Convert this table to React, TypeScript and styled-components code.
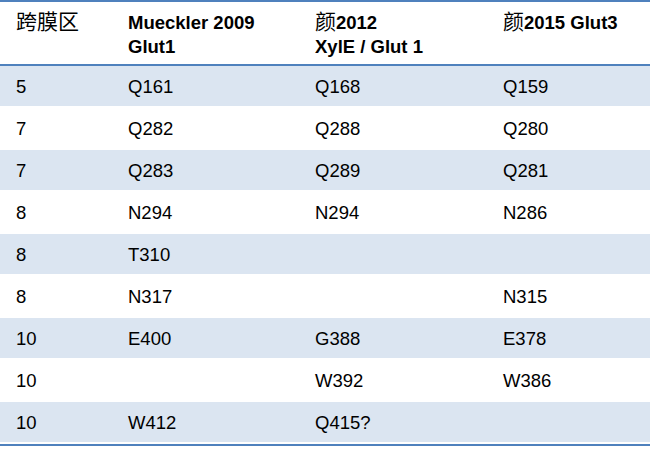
import React from 'react'
import styled, { createGlobalStyle } from 'styled-components'

const GlobalStyle = createGlobalStyle`
  body {
    margin: 0;
    background: #ffffff;
    font-family: 'Liberation Sans', 'Noto Sans CJK SC', sans-serif;
    color: #000000;
  }
`

const COLUMNS = '112px 187px 188px 163px'

const Table = styled.div`
  width: 650px;
  display: flex;
  flex-direction: column;
  border-top: 2px solid #4f81bd;
  border-bottom: 2px solid #4f81bd;
`

const HeaderRow = styled.div`
  display: grid;
  grid-template-columns: ${COLUMNS};
  height: 62px;
  box-sizing: content-box;
  border-bottom: 2px solid #4f81bd;
`

const HeaderCell = styled.div`
  padding: 9px 0 0 16px;
  font-size: 18.5px;
  line-height: 24px;
  font-weight: bold;
  white-space: pre-line;
`

const Cjk = styled.span`
  font-family: 'Noto Sans CJK SC', sans-serif;
  font-weight: normal;
  font-size: 21px;
  line-height: 18px;
`

const Row = styled.div<{ $shaded: boolean }>`
  display: grid;
  grid-template-columns: ${COLUMNS};
  height: 42px;
  box-sizing: border-box;
  background: ${({ $shaded }) => ($shaded ? '#dbe5f1' : '#ffffff')};
  border-bottom: 2px solid #ffffff;
`

const Cell = styled.div`
  display: flex;
  align-items: center;
  padding: 2px 0 0 16px;
  font-size: 18.5px;
`

const rows: string[][] = [
  ['5', 'Q161', 'Q168', 'Q159'],
  ['7', 'Q282', 'Q288', 'Q280'],
  ['7', 'Q283', 'Q289', 'Q281'],
  ['8', 'N294', 'N294', 'N286'],
  ['8', 'T310', '', ''],
  ['8', 'N317', '', 'N315'],
  ['10', 'E400', 'G388', 'E378'],
  ['10', '', 'W392', 'W386'],
  ['10', 'W412', 'Q415?', ''],
]

const App = () => (
  <>
    <GlobalStyle />
    <Table>
      <HeaderRow>
        <HeaderCell>
          <Cjk>跨膜区</Cjk>
        </HeaderCell>
        <HeaderCell>{'Mueckler 2009\nGlut1'}</HeaderCell>
        <HeaderCell>
          <Cjk>颜</Cjk>2012{'\n'}XylE / Glut 1
        </HeaderCell>
        <HeaderCell>
          <Cjk>颜</Cjk>2015 Glut3
        </HeaderCell>
      </HeaderRow>
      {rows.map((row, i) => (
        <Row key={i} $shaded={i % 2 === 0}>
          {row.map((value, j) => (
            <Cell key={j}>{value}</Cell>
          ))}
        </Row>
      ))}
    </Table>
  </>
)

export default App
